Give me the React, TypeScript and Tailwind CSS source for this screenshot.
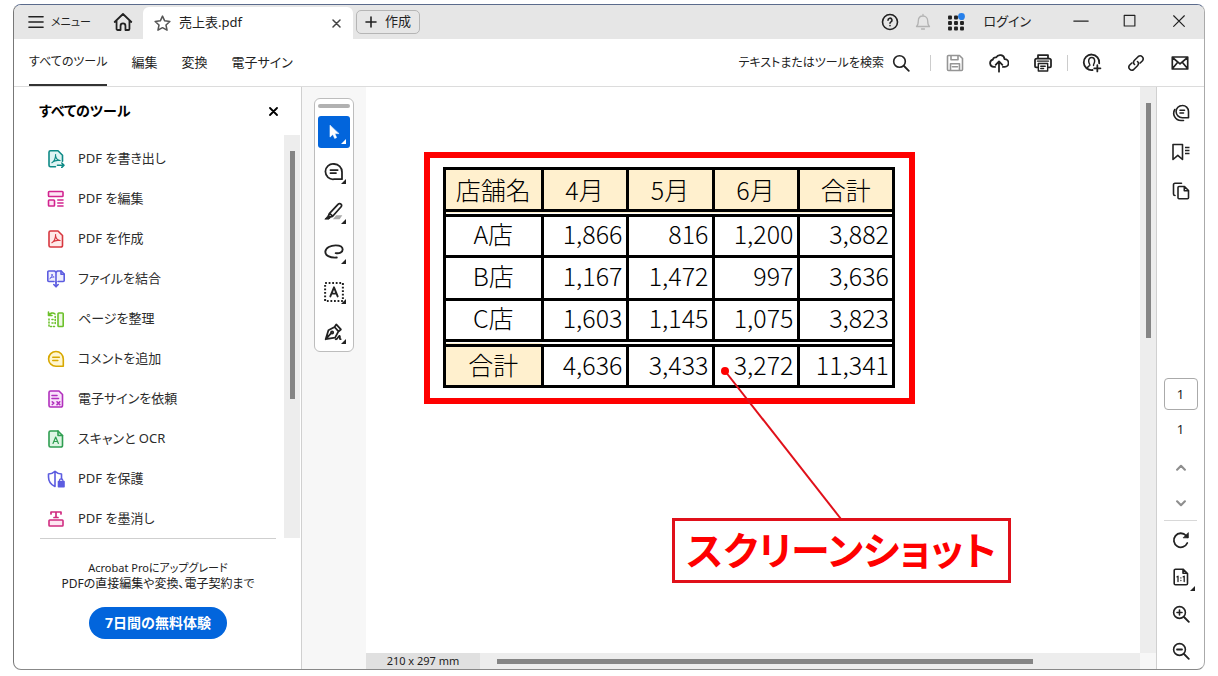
import React from 'react';

interface IconProps {
  children: React.ReactNode;
  className?: string;
}

const Icon: React.FC<IconProps> = ({ children, className = 'w-[18px] h-[18px]' }) => (
  <svg
    viewBox="0 0 18 18"
    className={`shrink-0 ${className}`}
    fill="none"
    stroke="currentColor"
    strokeWidth="1.6"
    strokeLinecap="round"
    strokeLinejoin="round"
    aria-hidden="true"
  >
    {children}
  </svg>
);

// Small triangle that marks a tool with a submenu
const MoreMark: React.FC = () => (
  <svg viewBox="0 0 5 5" className="absolute bottom-1 right-1 w-[5px] h-[5px]" aria-hidden="true">
    <path d="M5 0V5H0z" fill="currentColor" />
  </svg>
);

const acrobatMark =
  'M4.900 12.700c2-.9 3.900-4.300 3.700-8.100M8.600 6c.4 2.600 2 4.200 4.500 4.500M5.500 12.100c1.500-1.300 4.500-2.100 7.500-1.600';

const tools = [
  {
    label: 'PDF を書き出し',
    icon: (
      <Icon className="w-[18px] h-[18px] text-[#0e8a86]">
        <path d="M8.500 16.800H3.500a1.500 1.500 0 0 1-1.500-1.500V2.300A1.500 1.500 0 0 1 3.500.8H11l4.500 4.500v6" fill="#dff4f3" />
        <path d={acrobatMark} strokeWidth="1.200" />
        <path d="M10.500 15.200H17M14.800 13l2.200 2.200-2.200 2.200" />
      </Icon>
    ),
  },
  {
    label: 'PDF を編集',
    icon: (
      <Icon className="w-[18px] h-[18px] text-[#d2248f]">
        <rect x="1.500" y="1.500" width="14.500" height="5" rx=".8" fill="#fde6f4" />
        <rect x="1.500" y="10" width="6" height="6" rx=".8" fill="#fde6f4" />
        <path d="M10.800 10H16M10.800 13H16M10.800 16H16" />
      </Icon>
    ),
  },
  {
    label: 'PDF を作成',
    icon: (
      <Icon className="w-[18px] h-[18px] text-[#d7373f]">
        <path d="M3.500 1H11l4.500 4.500v10A1.500 1.500 0 0 1 14 17H3.500A1.500 1.500 0 0 1 2 15.500v-13A1.500 1.500 0 0 1 3.500 1z" fill="#ffe9e8" />
        <path d={acrobatMark} strokeWidth="1.200" />
      </Icon>
    ),
  },
  {
    label: 'ファイルを結合',
    icon: (
      <Icon className="w-[18px] h-[18px] text-[#5c5ce0]">
        <path d="M7 11.500H1.800a1 1 0 0 1-1-1V2a1 1 0 0 1 1-1h6l1.200 1.500V13M11 11.500h5.200a1 1 0 0 0 1-1V4l-3-3h-4L9 2.500" fill="#eeeefd" />
        <path d="M14 1v3.200h3.200M9 12v4.500M6.800 14.500L9 16.800l2.200-2.300" />
        <path d="M3 8.500c1.500-1 2-3 2-4.500.3 2 1 3 2.200 3-1.500-.2-3 .3-4.200 1.500z" strokeWidth=".9" />
      </Icon>
    ),
  },
  {
    label: 'ページを整理',
    icon: (
      <Icon className="w-[18px] h-[18px] text-[#6cc02b]">
        <rect x="11" y="3" width="5.200" height="13.500" rx=".8" fill="#edf9e3" />
        <path d="M1.500 2v3.500H5M1.500 5.500C3 3 6 2.200 8 4" />
        <path d="M2 9v7.500h6.500M8.200 6.500v7.500M5 9.500h1M5 13h1" strokeDasharray="1 2" />
      </Icon>
    ),
  },
  {
    label: 'コメントを追加',
    icon: (
      <Icon className="w-[18px] h-[18px] text-[#d8a800]">
        <path d="M9 1.500A7.300 7.300 0 0 1 16.300 9v7.300H9A7.400 7.400 0 1 1 9 1.500z" fill="#fff6d0" />
        <path d="M5.800 7.300h6.500M5.800 10.500h5" />
      </Icon>
    ),
  },
  {
    label: '電子サインを依頼',
    icon: (
      <Icon className="w-[18px] h-[18px] text-[#b130bd]">
        <path d="M3.500 1H12l3.500 3.500v11A1.500 1.500 0 0 1 14 17H3.500A1.500 1.500 0 0 1 2 15.500v-13A1.500 1.500 0 0 1 3.500 1z" fill="#f9e3fb" />
        <path d="M5 5.500h5M5 8.500h6.500M5.300 11.800l1.500 1.200-1.500 1.500M10 11.800l2.800 2.800M12.800 11.800L10 14.600" />
      </Icon>
    ),
  },
  {
    label: 'スキャンと OCR',
    icon: (
      <Icon className="w-[18px] h-[18px] text-[#2f9e51]">
        <path d="M3.500 1H11l4.500 4.500v10A1.500 1.500 0 0 1 14 17H3.500A1.500 1.500 0 0 1 2 15.500v-13A1.500 1.500 0 0 1 3.500 1z" fill="#def5e4" />
        <path d="M11 1v4.500h4.500" />
        <path d="M6 13.500l2.700-6.500 2.700 6.500M7 11.500h3.500" strokeWidth="1.200" />
      </Icon>
    ),
  },
  {
    label: 'PDF を保護',
    icon: (
      <Icon className="w-[18px] h-[18px] text-[#5c5ce0]">
        <path d="M8 16.500C3.500 14.500 1.500 11 1.500 7V4C4 4 6 3 8 1.300 10 3 12 4 14.500 4v5M8 1.500v15" />
        <path d="M11.500 11.500h5.500v5.200h-5.500z" fill="currentColor" />
        <path d="M12.500 11.500v-1a1.700 1.700 0 0 1 3.400 0v1" strokeWidth="1.200" />
      </Icon>
    ),
  },
  {
    label: 'PDF を墨消し',
    icon: (
      <Icon className="w-[18px] h-[18px] text-[#d02c80]">
        <rect x="2" y="10" width="14" height="6" rx=".8" fill="#fde6f1" />
        <path d="M4 4V2h10v2M9 2v5.500M7 7.500h4" strokeWidth="1.700" />
      </Icon>
    ),
  },
];

const sales = [
  { name: 'A店', values: ['1,866', '816', '1,200', '3,882'] },
  { name: 'B店', values: ['1,167', '1,472', '997', '3,636'] },
  { name: 'C店', values: ['1,603', '1,145', '1,075', '3,823'] },
];

const totals = ['4,636', '3,433', '3,272', '11,341'];

const TitleBar: React.FC = () => (
  <header className="flex h-[34px] shrink-0 items-center bg-[#e6e6e6] text-[#222]">
    <button className="flex items-center gap-[7px] pl-[14px] text-[11px]">
      <Icon className="w-4 h-4">
        <path d="M1 3h16M1 9h16M1 15h16" />
      </Icon>
      メニュー
    </button>
    <button className="ml-[22px] mr-[10px]" aria-label="ホーム">
      <Icon className="w-5 h-5">
        <path d="M1.500 9L9 1.800 16.500 9M3.200 7.800v7.400a1 1 0 0 0 1 1h2.600v-3.700a2.200 2.200 0 0 1 4.400 0v3.700h2.600a1 1 0 0 0 1-1V7.800" />
      </Icon>
    </button>
    <div className="mt-[2px] flex h-8 w-[210px] items-center gap-2 rounded-t-md bg-white pl-[11px] pr-3 text-[13px]">
      <Icon className="w-[17px] h-[17px] text-[#555]">
        <path d="M9 1.200l2.300 5 5.500.7-4.100 3.700 1.100 5.500L9 13.400l-4.800 2.700 1.100-5.500L1.200 6.900l5.500-.7z" />
      </Icon>
      <span className="flex-1">売上表.pdf</span>
      <button aria-label="タブを閉じる" className="text-[#444]">
        <Icon className="w-[9px] h-[9px]">
          <path d="M2 2l14 14M16 2L2 16" strokeWidth="3" />
        </Icon>
      </button>
    </div>
    <button className="ml-[3px] flex h-6 items-center gap-2 rounded-[5px] border border-[#b5b5b5] px-2 text-[13px]">
      <Icon className="w-3 h-3">
        <path d="M9 1.500v15M1.500 9h15" strokeWidth="2.400" />
      </Icon>
      作成
    </button>

    <div className="ml-auto flex items-center gap-[15px]">
      <button aria-label="ヘルプ">
        <Icon>
          <circle cx="9" cy="9" r="7.500" />
          <path d="M7 7.200a2 2 0 1 1 3 1.700c-.7.400-1 .7-1 1.300M9 12.600v.1" />
        </Icon>
      </button>
      <button aria-label="通知" className="text-[#b3b3b3]">
        <Icon>
          <path d="M2.500 13.500c1.500-1.200 1.800-2.500 1.800-5.500 0-3 2-5 4.700-5s4.700 2 4.700 5c0 3 .3 4.300 1.800 5.500zM7.500 16h3M9 3V1.500" strokeWidth="1.300" />
        </Icon>
      </button>
      <button aria-label="アプリ">
        <Icon>
          <g strokeWidth="1.900">
            <path d="M2 3.500h2v2H2zM8 3.500h2v2H8zM14 3.500h2v2h-2zM2 9h2v2H2zM8 9h2v2H8zM14 9h2v2h-2zM2 14.500h2v2H2zM8 14.500h2v2H8zM14 14.500h2v2h-2z" />
          </g>
          <circle cx="14.500" cy="3.500" r="3.400" fill="#2680eb" stroke="none" />
        </Icon>
      </button>
      <button className="ml-1 mr-[17px] text-[13px]">ログイン</button>
    </div>
    <div className="mr-px flex pl-2">
      <button className="flex w-[49px] justify-center" aria-label="最小化">
        <Icon className="w-4 h-4"><path d="M1 8h16" /></Icon>
      </button>
      <button className="flex w-[49px] justify-center" aria-label="最大化">
        <Icon className="w-4 h-4"><path d="M2.500 1.500h12v12h-12z" strokeWidth="1.300" /></Icon>
      </button>
      <button className="flex w-[49px] justify-center" aria-label="閉じる">
        <Icon className="w-4 h-4"><path d="M3 2l12 12M15 2L3 14" strokeWidth="1.300" /></Icon>
      </button>
    </div>
  </header>
);

const toolbarButton = 'flex h-11 w-11 items-center justify-center';

const Toolbar: React.FC = () => (
  <div className="flex h-12 shrink-0 items-center border-b border-[#dcdcdc] pl-[15px] pr-[2px] text-[13px] text-[#222]">
    <nav className="flex h-full gap-6">
      <a href="#tools" className="flex items-center border-b-2 border-[#333] text-xs">すべてのツール</a>
      <a href="#edit" className="flex items-center">編集</a>
      <a href="#convert" className="flex items-center">変換</a>
      <a href="#sign" className="flex items-center">電子サイン</a>
    </nav>
    <label className="ml-auto mr-[18px] flex items-center gap-2">
      <input
        type="text"
        aria-label="テキストまたはツールを検索"
        placeholder="テキストまたはツールを検索"
        className="w-[168px] bg-transparent text-right text-xs outline-none placeholder:text-[#222]"
      />
      <Icon>
        <circle cx="7.500" cy="7.500" r="5.800" />
        <path d="M12 12l4.800 4.800" strokeWidth="1.800" />
      </Icon>
    </label>
    <span className="mx-[2px] h-4 w-px bg-[#ccc]" />
    <button className={`${toolbarButton} text-[#959595]`} aria-label="保存">
      <Icon>
        <path d="M2.500 1.500h11l3 3v11a1 1 0 0 1-1 1h-13a1 1 0 0 1-1-1v-13a1 1 0 0 1 1-1z" />
        <path d="M5 1.700v4h7v-4M4.500 16V9.800h9V16M6.500 12.800h5" />
      </Icon>
    </button>
    <button className={toolbarButton} aria-label="クラウドに保存">
      <Icon className="w-5 h-5">
        <path d="M5.500 12.500H4.300A3.300 3.300 0 0 1 3.500 6 2.400 2.400 0 0 1 6.500 4 4 4 0 0 1 14 5.500a3.500 3.500 0 0 1 .2 7h-1.700M9 16.800V8M6 10.600L9 7.600l3 3" />
      </Icon>
    </button>
    <button className={toolbarButton} aria-label="印刷">
      <Icon className="w-5 h-5">
        <path d="M4.500 5V2h9v3M4 13H2.800a1 1 0 0 1-1-1V6.500a1.500 1.500 0 0 1 1.500-1.500h11.400a1.500 1.500 0 0 1 1.500 1.500V12a1 1 0 0 1-1 1H14" />
        <path d="M4.800 9.500h8.400v6.700H4.800zM7 12h4M7 14h2.500M4 7.300h10" strokeWidth="1.300" />
      </Icon>
    </button>
    <span className="mx-[2px] h-4 w-px bg-[#ccc]" />
    <button className={toolbarButton} aria-label="共有">
      <Icon className="w-5 h-5">
        <path d="M9.500 15.300a7 7 0 1 1 6-6" />
        <path d="M5 13.300c.3-1.500 1.500-1.600 2-2.100.5-.7-1-1.700-1-3.900C6 5.300 7 4 8.700 4s2.700 1.300 2.700 3.300c0 2.200-1.500 3.200-1 3.900" strokeWidth="1.300" />
        <path d="M13.800 11v5.600M11 13.800h5.600" />
      </Icon>
    </button>
    <button className={toolbarButton} aria-label="リンクをコピー">
      <Icon>
        <path d="M7.500 10.500a3 3 0 0 1 0-4.200l3.800-3.800a3 3 0 0 1 4.200 4.200l-2.300 2.300M10.500 7.500a3 3 0 0 1 0 4.200l-3.800 3.800a3 3 0 0 1-4.200-4.200L4.800 9" />
      </Icon>
    </button>
    <button className={toolbarButton} aria-label="メール">
      <Icon>
        <path d="M1.300 3h15.400v12H1.300zM1.500 3.500L9 9.800l7.500-6.300M1.500 14.500l5-6M16.500 14.500l-5-6" strokeWidth="1.700" />
      </Icon>
    </button>
  </div>
);

const Sidebar: React.FC = () => (
  <aside className="flex w-[288px] shrink-0 flex-col border-r border-[#d0d0d0]">
    <div className="flex h-12 shrink-0 items-center justify-between pl-[25px] pr-[23px]">
      <h2 className="text-sm font-bold text-black">すべてのツール</h2>
      <button aria-label="パネルを閉じる">
        <Icon className="w-[9px] h-[9px]">
          <path d="M2 2l14 14M16 2L2 16" strokeWidth="3.600" />
        </Icon>
      </button>
    </div>
    <div className="flex min-h-0 flex-1 pr-px">
      <ul className="flex-1 overflow-hidden pl-[33px] pt-1">
        {tools.map((tool) => (
          <li key={tool.label}>
            <button className="flex h-10 items-center gap-[13px] text-[13px] text-[#2c2c2c]">
              {tool.icon}
              {tool.label}
            </button>
          </li>
        ))}
      </ul>
      <div className="w-4 bg-[#ededed] pt-4">
        <div className="mx-auto h-[248px] w-[5px] bg-[#858585]" />
      </div>
    </div>
    <div className="ml-[26px] mr-[25px] border-t border-[#cfcfcf] pb-[30px] pt-[21px] text-center text-xs leading-4 text-[#222]">
      <p className="text-[11px] leading-4">Acrobat Proにアップグレード</p>
      <p className="whitespace-nowrap">PDFの直接編集や変換、電子契約まで</p>
      <button className="mt-[15px] h-8 rounded-full bg-[#0265dc] px-4 text-sm font-bold text-white">
        7日間の無料体験
      </button>
    </div>
  </aside>
);

const quickButton = 'relative flex h-8 w-8 items-center justify-center rounded-[3px] text-[#222]';

const QuickTools: React.FC = () => (
  <div className="w-16 shrink-0 bg-[#f7f7f7] pl-3 pt-[11px]">
    <div className="flex w-10 flex-col items-center gap-2 rounded-md border border-[#bdbdbd] bg-white pb-[3px] pt-[5px]">
      <span className="h-1 w-8 rounded-full bg-[#b1b1b1]" />
      <button className="relative flex h-8 w-8 items-center justify-center rounded-[3px] bg-[#0265dc] text-white" aria-label="選択">
        <Icon>
          <path d="M5 2.500v11.600l2.900-2.700 1.800 4 1.900-.8-1.800-4h3.900z" fill="currentColor" strokeWidth=".6" />
        </Icon>
        <MoreMark />
      </button>
      <button className={quickButton} aria-label="コメント">
        <Icon className="w-5 h-5">
          <path d="M9 1.800A7 7 0 0 1 16.200 9v6.500H9A6.900 6.900 0 1 1 9 1.800zM5.800 7.300h6.500M5.800 10h5" />
        </Icon>
        <MoreMark />
      </button>
      <button className={quickButton} aria-label="ハイライト">
        <Icon className="w-5 h-5">
          <path d="M8 15.500l3-3.500h5.500L14 15.500z" fill="#aaa" stroke="none" />
          <path d="M5 10.200L12.800 2a1.700 1.700 0 0 1 2.600 2.300L7.800 12.800zM4.800 10.500l-.8 2 1.200 1.200 2.300-.7" />
          <path d="M1 15.200l2.500-2.700 2 1.800-.8.900z" fill="currentColor" strokeWidth=".8" />
        </Icon>
        <MoreMark />
      </button>
      <button className={quickButton} aria-label="描画">
        <Icon className="w-5 h-5">
          <path d="M11.500 14C5 14.500 1 12 1.200 8.700 1.500 5 6 3 10.500 3c3.800 0 6.300 1.500 6.300 3.800 0 2.500-3 3.800-6.300 3.200" strokeWidth="1.700" />
        </Icon>
        <MoreMark />
      </button>
      <button className={quickButton} aria-label="テキスト">
        <Icon className="w-5 h-5">
          <path d="M1 1h16v16H1z" strokeDasharray="1.600 1.600" strokeLinecap="butt" strokeWidth="1.800" />
          <path d="M5.700 13L9 4.800l3.300 8.200M6.900 10.500h4.200" strokeWidth="1.700" />
        </Icon>
        <MoreMark />
      </button>
      <button className={quickButton} aria-label="署名">
        <Icon className="w-5 h-5">
          <path d="M1.500 15.500L4 7.500l5.500-3 3.500 4-3 5.500zM1.500 15.500l5-5.500M9.500 4.500l1.500-2.300 4.200 4.500L13 8.500" />
          <circle cx="7.300" cy="9.500" r="1" />
          <path d="M10.500 15.500c2 .5 2.500-3.500 3.500-3s-.5 3 1 3" />
        </Icon>
        <MoreMark />
      </button>
    </div>
  </div>
);

const headCell = 'border-[3px] border-b-8 border-black [border-bottom-style:double] bg-[#fff0ce] pb-[2px] text-center font-light';
const nameCell = 'border-[3px] border-black pb-[6px] text-center font-light';
const valueCell = 'border-[3px] border-black pb-[6px] pr-[3px] text-right';

// The outer frame belongs to the wrapper so that it stays solid beside the double rules
const SalesTable: React.FC = () => (
  <div className="w-[452px] border-[3px] border-black">
    <table className="w-full table-fixed border-collapse border-hidden font-['Noto_Sans_CJK_JP',sans-serif] text-[25px] leading-8 font-light text-black [font-feature-settings:normal]">
      <colgroup>
        <col className="w-[96px]" />
        <col className="w-[85px]" />
        <col className="w-[86px]" />
        <col className="w-[85px]" />
        <col />
      </colgroup>
      <thead>
        <tr className="h-[43px]">
          <th scope="col" className={headCell}>店舗名</th>
          <th scope="col" className={headCell}>4月</th>
          <th scope="col" className={headCell}>5月</th>
          <th scope="col" className={headCell}>6月</th>
          <th scope="col" className={headCell}>合計</th>
        </tr>
      </thead>
      <tbody>
        {sales.map((row) => (
          <tr key={row.name} className="h-[43px]">
            <th scope="row" className={nameCell}>{row.name}</th>
            {row.values.map((value, index) => (
              <td key={index} className={valueCell}>{value}</td>
            ))}
          </tr>
        ))}
      </tbody>
      <tfoot>
        <tr className="h-[42px]">
          <th scope="row" className="border-[3px] border-t-8 border-black [border-top-style:double] bg-[#fff0ce] pb-1 text-center font-light">合計</th>
          {totals.map((value) => (
            <td key={value} className="border-[3px] border-t-8 border-black [border-top-style:double] pb-1 pr-[3px] text-right">{value}</td>
          ))}
        </tr>
      </tfoot>
    </table>
  </div>
);

const DocumentView: React.FC = () => (
  <main className="flex min-w-0 flex-1 flex-col">
    <div className="flex min-h-0 flex-1">
      <div className="relative flex-1 overflow-hidden bg-white pl-[58px] pt-[65px]">
        <div className="w-fit border-[6px] border-[#fe0000] pb-[10px] pl-[13px] pr-[14px] pt-[9px]">
          <SalesTable />
        </div>
        {/* Annotation: leader line and callout over the page */}
        <svg viewBox="0 0 130 160" className="absolute left-[352px] top-[276px] h-[160px] w-[130px]" aria-hidden="true">
          <path d="M7 8L123 156" stroke="#e0101a" strokeWidth="2" />
          <circle cx="7" cy="8" r="4" fill="#fe0000" />
        </svg>
        <div className="absolute left-[306px] top-[431px] flex h-[65px] w-[339px] items-center justify-center whitespace-nowrap border-[3px] border-[#e0101a] bg-white text-[39px] font-bold text-[#fe0000]">
          スクリーンショット
        </div>
      </div>
      <div className="w-4 bg-[#ededed] pt-4">
        <div className="mx-auto h-[235px] w-[5px] bg-[#858585]" />
      </div>
    </div>
    <div className="flex h-4 shrink-0 items-center bg-[#ededed]">
      <span className="flex h-full w-[114px] items-center justify-center bg-[#e0e0e0] text-[11px] text-[#222]">210 x 297 mm</span>
      <div className="flex-1 pl-[17px]">
        <div className="h-[5px] w-5/6 bg-[#858585]" />
      </div>
      <span className="h-full w-4 bg-[#f7f7f7]" />
    </div>
  </main>
);

const railButton = 'relative flex w-9 shrink-0 items-center justify-center';

const PageRail: React.FC = () => (
  <aside className="flex w-12 shrink-0 flex-col items-center border-l border-[#d0d0d0] pt-[6px] text-[#222]">
    <button className={`${railButton} h-[39px]`} aria-label="コメント">
      <Icon>
        <path d="M10.200 1.500a6 6 0 0 1 6.300 6v6.200h-6.300a6.100 6.100 0 0 1 0-12.200zM8 6.300h4.500M8 9h3.500" />
        <path d="M2.800 5.500C0 10 3 16.500 9 16.500h2.500" />
      </Icon>
    </button>
    <button className={`${railButton} h-[39px]`} aria-label="しおり">
      <Icon>
        <path d="M1 1.500h9.500v15L5.800 12.300 1 16.500z" />
        <path d="M13 4.500H17.500M13 7.500H17.500M13 10.500H17.500" strokeLinecap="butt" />
      </Icon>
    </button>
    <button className={`${railButton} h-[39px]`} aria-label="ページ">
      <Icon>
        <path d="M7 4.500h5.500l4 4v7.300a1 1 0 0 1-1 1H7a1 1 0 0 1-1-1V5.500a1 1 0 0 1 1-1zM12.300 4.700v4h4" />
        <path d="M3 13.500a1.500 1.500 0 0 1-1.500-1.500V3A1.500 1.500 0 0 1 3 1.300h6.500" />
      </Icon>
    </button>
    <input
      aria-label="ページ番号"
      defaultValue="1"
      className="mt-auto h-8 w-[34px] rounded border border-[#aaa] text-center text-[13px] outline-none"
    />
    <span className="flex h-10 shrink-0 items-center text-[13px]">1</span>
    <button className={`${railButton} h-[35px] text-[#8e8e8e]`} aria-label="前のページ">
      <Icon className="w-[10px] h-[10px]"><path d="M2 12l7-7 7 7" strokeWidth="3.800" /></Icon>
    </button>
    <button className={`${railButton} h-[35px] text-[#8e8e8e]`} aria-label="次のページ">
      <Icon className="w-[10px] h-[10px]"><path d="M2 6l7 7 7-7" strokeWidth="3.800" /></Icon>
    </button>
    <span className="h-px w-[33px] shrink-0 bg-[#d8d8d8]" />
    <button className={`${railButton} h-[37px]`} aria-label="回転">
      <Icon>
        <path d="M15.300 12A7 7 0 1 1 14 4.500l1.500 1.700" strokeWidth="1.800" />
        <path d="M16.300 2v4.800h-4.800z" fill="currentColor" strokeWidth=".8" />
      </Icon>
    </button>
    <button className={`${railButton} h-[37px]`} aria-label="実際のサイズ">
      <Icon>
        <path d="M3.500 1.200H11l4.500 4.300v10a1.300 1.300 0 0 1-1.300 1.300H3.500a1.300 1.300 0 0 1-1.300-1.300v-13a1.300 1.300 0 0 1 1.300-1.300zM11 1.300v4h4.300" />
        <path d="M5 8.800l1-.6v5.300M11.200 8.800l1-.6v5.300M8.900 9.800v.1M8.900 12.500v.1" strokeWidth="1.300" />
      </Icon>
      <MoreMark />
    </button>
    <button className={`${railButton} h-[37px]`} aria-label="拡大">
      <Icon>
        <circle cx="7.500" cy="7.500" r="5.900" />
        <path d="M12 12l4.800 4.800" strokeWidth="1.900" />
        <path d="M7.500 5v5M5 7.500h5" />
      </Icon>
    </button>
    <button className={`${railButton} h-[37px]`} aria-label="縮小">
      <Icon>
        <circle cx="7.500" cy="7.500" r="5.900" />
        <path d="M12 12l4.800 4.800M5 7.500h5" strokeWidth="1.800" />
      </Icon>
    </button>
  </aside>
);

const App: React.FC = () => (
  <div className="flex h-screen bg-white px-[13px] pb-[6px] pt-1 font-['Noto_Sans','Noto_Sans_CJK_JP',sans-serif] [font-feature-settings:'palt']">
    <div className="flex min-w-0 flex-1 flex-col overflow-hidden rounded-lg border border-b-[#888] border-l-[#777] border-r-[#aaa] border-t-[#5b6b8c] bg-white">
      <TitleBar />
      <Toolbar />
      <div className="flex min-h-0 flex-1">
        <Sidebar />
        <QuickTools />
        <DocumentView />
        <PageRail />
      </div>
    </div>
  </div>
);

export default App;
